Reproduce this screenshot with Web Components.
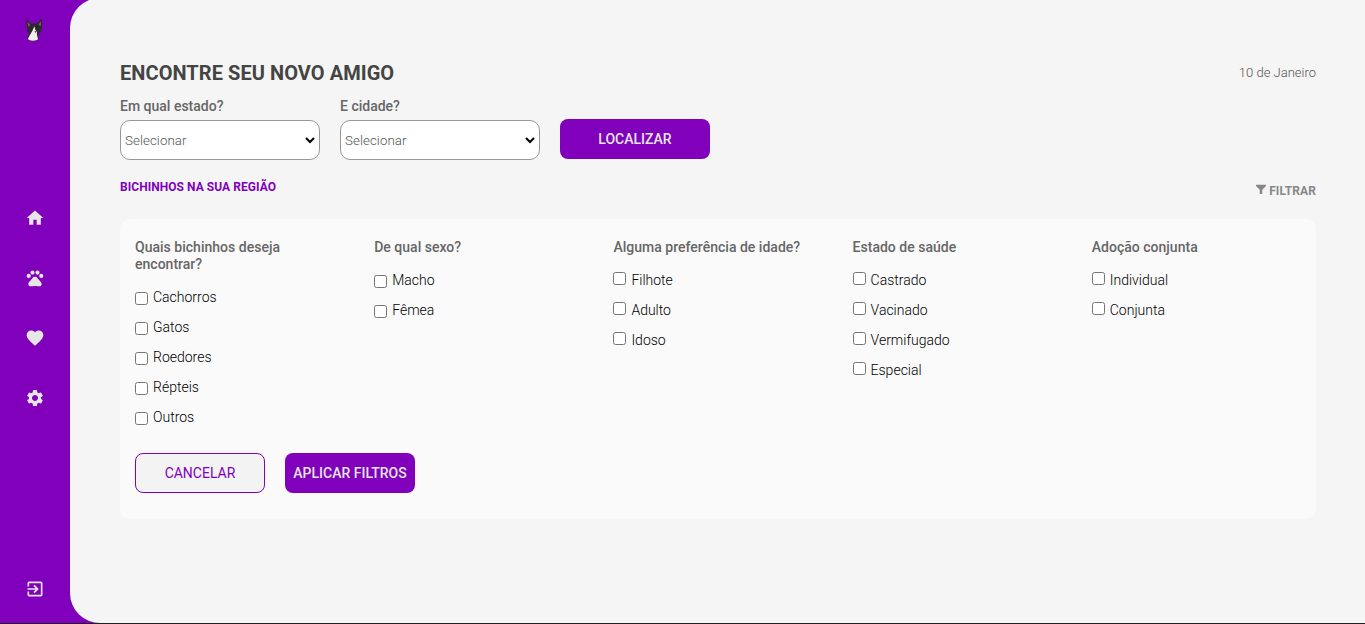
<!DOCTYPE html>
<html lang="pt-BR">
<head>
<meta charset="utf-8">
<title>Encontre seu novo amigo</title>
<style>
html, body { margin: 0; height: 100%; overflow: hidden; }
body { font-family: Roboto, "Liberation Sans", sans-serif; background: #8000bc; }
</style>
</head>
<body>
<pet-app></pet-app>
<script>
const define = (name, html) => customElements.define(name, class extends HTMLElement {
  constructor() {
    super();
    const t = document.createElement('template');
    t.innerHTML = html;
    this.attachShadow({ mode: 'open' }).append(t.content.cloneNode(true));
  }
});

define('pet-logo', `<style>:host{display:block;width:18px;height:25px}svg{display:block}</style>
<svg width="18" height="25" viewBox="0 0 18 25">
<path d="M.4 2.2Q1 1.200 2.200 2.700L5 5.800Q8.500 4.700 11.500 5.400L14.600 1.500Q15.800.7 16.300 2.200L16 10Q15.800 14 12.800 15.200L12.200 21.500Q12 23 7.500 23Q2.300 23.200 1.500 21.500L2.700 15.500Q.9 13 .9 10Z" fill="#2b2a2c"/>
<path d="M1.500 3.800L4.200 6.800 2.400 9.300ZM15.200 3.200L14.700 8.200 12.300 6.400Z" fill="#75605f"/>
<path d="M8.400 8.300L9.300 11.700 11 14.200 10.800 16 12 21.300Q11.200 22.700 7 22.700 1.700 22.600 2.100 20.500L4.200 16.500 6.200 13.200Z" fill="#f1eeee"/>
<path d="M8.600 13L10.400 13.500 9.300 15Z" fill="#302c2c"/>
</svg>`);

const icons = {
  home: 'M10 20v-6h4v6h5v-8h3L12 3 2 12h3v8z',
  heart: 'M12 21.35l-1.45-1.32C5.4 15.36 2 12.28 2 8.5 2 5.42 4.42 3 7.5 3c1.74 0 3.41.81 4.5 2.09C13.09 3.81 14.76 3 16.5 3 19.58 3 22 5.42 22 8.5c0 3.78-3.4 6.86-8.55 11.54z',
  gear: 'M19.14 12.94c.04-.3.06-.61.06-.94 0-.32-.02-.64-.07-.94l2.03-1.58c.18-.14.23-.41.12-.61l-1.92-3.32c-.12-.22-.37-.29-.59-.22l-2.39.96c-.5-.38-1.03-.7-1.62-.94l-.36-2.54c-.04-.24-.24-.41-.48-.41h-3.84c-.24 0-.43.17-.47.41l-.36 2.54c-.59.24-1.13.57-1.62.94l-2.39-.96c-.22-.08-.47 0-.59.22L2.740 8.870c-.12.21-.08.47.12.61l2.030 1.580c-.05.3-.09.63-.09.94s.02.64.07.94l-2.030 1.580c-.18.14-.23.41-.12.61l1.920 3.320c.12.22.37.29.59.22l2.390-.96c.5.38 1.030.7 1.620.94l.36 2.540c.05.24.24.41.48.41h3.840c.24 0 .44-.17.47-.41l.36-2.540c.59-.24 1.130-.56 1.620-.94l2.390.96c.22.08.47 0 .59-.22l1.920-3.320c.12-.22.07-.47-.12-.61zM12 15.600c-1.980 0-3.600-1.620-3.600-3.600s1.620-3.600 3.600-3.600 3.600 1.620 3.600 3.600-1.620 3.600-3.600 3.600z',
  paw: 'M4.500 7a2.500 2.500 0 1 0 0 5 2.500 2.500 0 0 0 0-5zM9 3a2.500 2.500 0 1 0 0 5 2.500 2.500 0 0 0 0-5zM15 3a2.500 2.500 0 1 0 0 5 2.500 2.500 0 0 0 0-5zM19.500 7a2.500 2.500 0 1 0 0 5 2.500 2.500 0 0 0 0-5zM17.340 14.860c-.87-1.020-1.600-1.890-2.480-2.910-.46-.54-1.050-1.080-1.750-1.320-.7-.25-1.520-.25-2.220 0s-1.290.78-1.750 1.320c-.87 1.020-1.600 1.890-2.480 2.910-1.310 1.310-2.920 2.760-2.620 4.790.29 1.020 1.020 2.030 2.330 2.320.73.15 3.060-.44 5.540-.44h.18c2.480 0 4.810.58 5.540.44 1.310-.29 2.040-1.310 2.330-2.320.31-2.040-1.300-3.490-2.610-4.800z',
  exit: 'M10.090 15.590L11.500 17l5-5-5-5-1.410 1.410L12.670 11H3v2h9.670zM19 3H5c-1.110 0-2 .9-2 2v4h2V5h14v14H5v-4H3v4c0 1.100.89 2 2 2h14c1.100 0 2-.9 2-2V5c0-1.100-.9-2-2-2z',
  funnel: 'M0 2H24V4.500L15 14V24H9V14L0 4.500Z'
};
customElements.define('pet-icon', class extends HTMLElement {
  constructor() {
    super();
    this.attachShadow({ mode: 'open' });
  }
  connectedCallback() {
    this.shadowRoot.innerHTML = `<style>:host{display:block;width:var(--size,20px);height:var(--size,20px)}svg{display:block;width:100%;height:100%}</style>
    <svg viewBox="0 0 24 24" fill="currentColor"><path d="${icons[this.getAttribute('name')]}"/></svg>`;
  }
});

define('pet-sidebar', `<style>
:host{display:flex;flex-direction:column;align-items:center;width:70px;height:624px;box-sizing:border-box;padding:18px 0 25px;justify-content:space-between;color:#e6e6e6}
nav{display:flex;flex-direction:column;gap:40px;padding-bottom:6px}
</style>
<pet-logo></pet-logo>
<nav><pet-icon name="home"></pet-icon><pet-icon name="paw"></pet-icon><pet-icon name="heart"></pet-icon><pet-icon name="gear"></pet-icon></nav>
<pet-icon name="exit"></pet-icon>`);

define('pet-select', `<style>
:host{display:block;width:200px}
label{display:block;font:500 14px/16px Roboto,sans-serif;color:#666;margin-bottom:6px}
.field{display:grid;grid-template-columns:1fr 10px;align-items:center;width:200px;height:40px;box-sizing:border-box;padding:0 4px;border:1px solid #999;border-radius:10px;background:#fff}
select,svg{grid-row:1}
select{grid-column:1/3;appearance:none;width:100%;height:38px;margin:0;padding:0;border:0;background:transparent;color:#555;font:300 13.333px Roboto,sans-serif;letter-spacing:.06px}
svg{grid-column:2;display:block;pointer-events:none}
</style>
<label><slot></slot></label><div class="field"><select><option>Selecionar</option></select><svg width="10" height="8" viewBox="0 0 10 8"><path d="M1 2L5 6 9 2" fill="none" stroke="#000" stroke-width="2"/></svg></div>`);

define('pet-button', `<style>
:host{display:block;width:var(--w,130px);height:40px}
button{display:block;width:100%;height:40px;padding:0;border:var(--border,0);border-radius:8px;background:var(--bg,#8000bc);color:var(--fg,#e6e6e6);font:var(--weight,500) 14px Roboto,sans-serif}
</style><button><slot></slot></button>`);

define('pet-check', `<style>
:host{display:block;height:30px}
label{display:flex;height:20px;align-items:flex-start;font-size:14px;line-height:20px;font-weight:300;color:#000}
input{margin:var(--check-top,4.5px) 5px 0 0;width:13px;height:13px;flex:none}
</style><label><input type="checkbox"><span><slot></slot></span></label>`);

define('pet-group', `<style>
:host{display:block;width:20%;box-sizing:border-box;padding:0 15px}
h3{margin:0 0 14px;font-size:14px;line-height:17px;font-weight:500;letter-spacing:.015px;color:#666}
</style><h3><slot name="title"></slot></h3><slot></slot>`);

define('pet-filters', `<style>
:host{display:block;box-sizing:border-box;height:300px;padding-top:20px;border-radius:10px;background:#fafafa}
.groups{display:flex;height:214px;align-items:flex-start}
.high{--check-top:2px}
.actions{display:flex;gap:20px;padding-left:15px}
.cancel{--bg:#f3f3f3;--fg:#8000bc;--border:1px solid #8000bc;--weight:400}
</style>
<div class="groups">
<pet-group><span slot="title">Quais bichinhos deseja encontrar?</span><pet-check>Cachorros</pet-check><pet-check>Gatos</pet-check><pet-check>Roedores</pet-check><pet-check>Répteis</pet-check><pet-check>Outros</pet-check></pet-group>
<pet-group><span slot="title">De qual sexo?</span><pet-check>Macho</pet-check><pet-check>Fêmea</pet-check></pet-group>
<pet-group class="high"><span slot="title">Alguma preferência de idade?</span><pet-check>Filhote</pet-check><pet-check>Adulto</pet-check><pet-check>Idoso</pet-check></pet-group>
<pet-group class="high"><span slot="title">Estado de saúde</span><pet-check>Castrado</pet-check><pet-check>Vacinado</pet-check><pet-check>Vermifugado</pet-check><pet-check>Especial</pet-check></pet-group>
<pet-group class="high"><span slot="title">Adoção conjunta</span><pet-check>Individual</pet-check><pet-check>Conjunta</pet-check></pet-group>
</div>
<div class="actions"><pet-button class="cancel">CANCELAR</pet-button><pet-button>APLICAR FILTROS</pet-button></div>`);

define('pet-main', `<style>
:host{display:block;flex:1;box-sizing:border-box;height:625px;margin-top:-2px;padding:64px 49px 0 50px;background:#f5f5f5;border-radius:30px 0 0 30px}
header{display:flex;justify-content:space-between;height:24px;margin-bottom:12px}
h1{margin:0;font-size:20px;line-height:23px;font-weight:700;letter-spacing:.06px;color:#444}
time{font-size:13px;line-height:22px;font-weight:300;color:#555}
.search{display:flex;gap:20px;height:62px}
.go{--w:150px;margin-top:21px}
.bar{display:flex;justify-content:space-between;height:41px;margin-top:18px;font-size:12px;font-weight:700}
h2{margin:0;font-size:12px;line-height:18px;letter-spacing:.05px;color:#8000bc}
.filter{display:flex;height:16px;gap:3px;margin-top:5px;color:#888;line-height:16px;letter-spacing:.1px}
.filter pet-icon{--size:10px;margin-top:1px}
</style>
<header><h1>ENCONTRE SEU NOVO AMIGO</h1><time>10 de Janeiro</time></header>
<div class="search"><pet-select>Em qual estado?</pet-select><pet-select>E cidade?</pet-select><pet-button class="go">LOCALIZAR</pet-button></div>
<div class="bar"><h2>BICHINHOS NA SUA REGIÃO</h2><div class="filter"><pet-icon name="funnel"></pet-icon><span>FILTRAR</span></div></div>
<pet-filters></pet-filters>`);

define('pet-app', `<style>
:host{display:flex;box-sizing:border-box;height:624px;background:linear-gradient(#8000bc 623px,#202020 623px)}
</style><pet-sidebar></pet-sidebar><pet-main></pet-main>`);
</script>
</body>
</html>
